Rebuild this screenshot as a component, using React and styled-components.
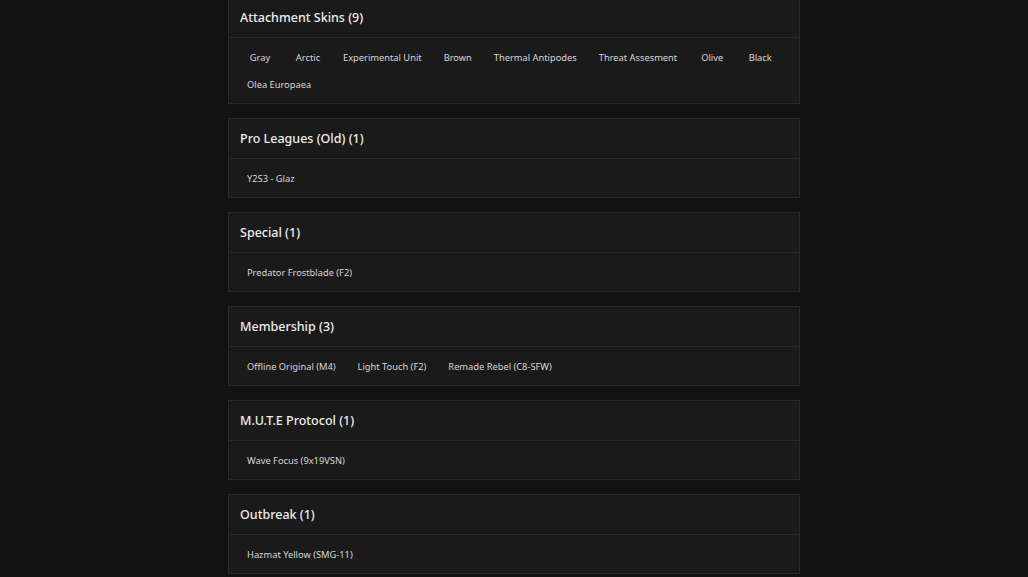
import React from 'react';
import styled, { createGlobalStyle } from 'styled-components';

const GlobalStyle = createGlobalStyle`
	html, body {
		margin: 0;
		padding: 0;
		background: #121212;
	}
	body {
		font-family: 'Noto Sans', 'Open Sans', sans-serif;
		overflow: hidden;
	}
`;

const sections = [
	{
		title: 'Attachment Skins',
		items: ['Gray', 'Arctic', 'Experimental Unit', 'Brown', 'Thermal Antipodes', 'Threat Assesment', 'Olive', 'Black', 'Olea Europaea']
	},
	{ title: 'Pro Leagues (Old)', items: ['Y2S3 - Glaz'] },
	{ title: 'Special', items: ['Predator Frostblade (F2)'] },
	{ title: 'Membership', items: ['Offline Original (M4)', 'Light Touch (F2)', 'Remade Rebel (C8-SFW)'] },
	{ title: 'M.U.T.E Protocol', items: ['Wave Focus (9x19VSN)'] },
	{ title: 'Outbreak', items: ['Hazmat Yellow (SMG-11)'] }
];

const Page = styled.div`
	width: 572px;
	margin: -3px auto 0;
	display: flex;
	flex-direction: column;
	gap: 14px;
`;

const Card = styled.section`
	background: #1a1a1a;
	border: 1px solid #2a2a2a;
`;

const CardHeader = styled.div`
	height: 39px;
	display: flex;
	align-items: center;
	padding: 0 11px;
	border-bottom: 1px solid #2a2a2a;
	color: #ededed;
	font-size: 12.5px;
	font-weight: 500;
`;

const ItemList = styled.div`
	display: flex;
	flex-wrap: wrap;
	column-gap: 8px;
	padding: 6px 11px 5px;
`;

const Item = styled.span`
	height: 27px;
	min-width: 40px;
	box-sizing: border-box;
	padding: 0 7px;
	display: flex;
	align-items: center;
	justify-content: center;
	color: #d8d8d8;
	font-size: 9.3px;
	white-space: nowrap;
`;

const App = () => (
	<>
		<GlobalStyle />
		<Page>
			{sections.map((s) => (
				<Card key={s.title}>
					<CardHeader>
						{s.title} ({s.items.length})
					</CardHeader>
					<ItemList>
						{s.items.map((item) => (
							<Item key={item}>{item}</Item>
						))}
					</ItemList>
				</Card>
			))}
		</Page>
	</>
);

export default App;
